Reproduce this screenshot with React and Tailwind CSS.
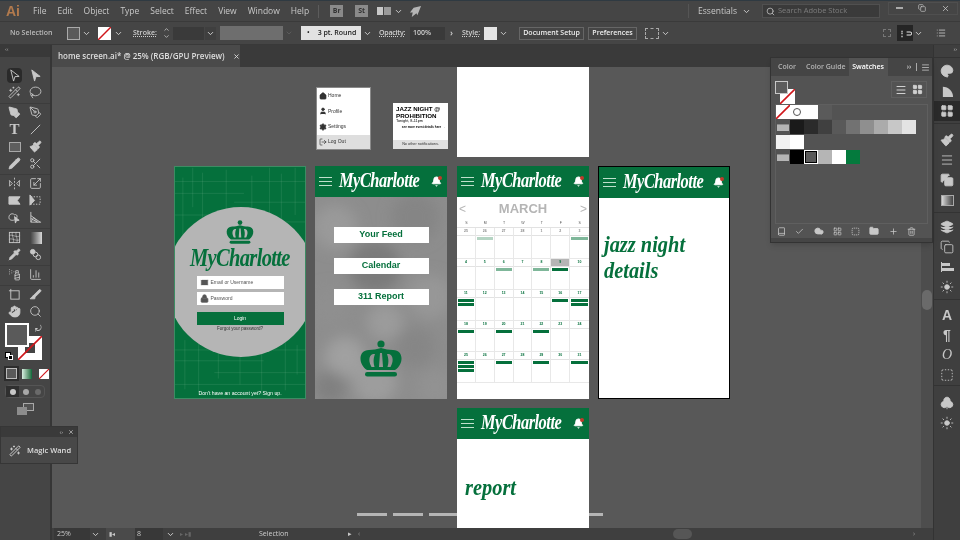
import React from "react";
import {
  Bell, Book, Check, ChevronDown, ChevronUp, ChartColumn, Cloud, Club, Copy, FlipHorizontal2, Folder, Hand,
  House, Layers, LayoutGrid, List, Lasso, LogOut, Menu, Palette, Paintbrush, PenTool, Pencil, Pipette, Plus,
  Scaling, Scissors, Search, Settings, SprayCan, SquareDashed, Sun, Trash2, User, WandSparkles, X, Slice, Mail, Lock,
} from "lucide-react";

const green = "bg-[#05703c]";
const script = "font-['Liberation_Serif',serif] italic font-bold";

// ---- small shared drawings ----
const Chev = ({ className = "" }) => <ChevronDown size={9} strokeWidth={2.5} className={"text-[#d0d0d0] " + className} />;

const NoneBox = ({ className = "" }) => (
  <svg viewBox="0 0 14 14" className={className}>
    <rect width="14" height="14" fill="#fff" />
    <line x1="0" y1="14" x2="14" y2="0" stroke="#d0161b" strokeWidth="1.6" />
  </svg>
);

const Crown = ({ className = "" }) => (
  <svg viewBox="0 0 44 38" className={className}>
    <circle cx="22" cy="4" r="3.6" fill="#05703c" />
    <path
      fillRule="evenodd"
      fill="#05703c"
      d="M8 30C-1 24 -1 10 10 10C14 10 18 9 22 8C26 9 30 10 34 10C45 10 45 24 36 30ZM21 13L23 13L24 27L20 27ZM14 14C10 15 9 21 12.5 27L15.5 27C14 22 14.5 18 16 14ZM30 14C34 15 35 21 31.5 27L28.5 27C30 22 29.5 18 28 14Z"
    />
    <rect x="6" y="32" width="32" height="4.5" rx="2.2" fill="#05703c" />
  </svg>
);

const AppHeader = () => (
  <div className={"h-[31px] shrink-0 flex items-center pl-[4px] pr-[5px] " + green}>
    <div className="w-[13px] shrink-0 flex flex-col gap-[3px]">
      <div className="h-[1px] bg-[#bfe0cc]" />
      <div className="h-[1px] bg-[#bfe0cc]" />
      <div className="h-[1px] bg-[#bfe0cc]" />
    </div>
    <span className={"ml-[7px] -mt-[3px] flex-1 min-w-0 origin-left scale-x-[0.82] text-white text-[20px] leading-none tracking-[-0.6px] whitespace-nowrap " + script}>
      MyCharlotte
    </span>
    <div className="relative shrink-0">
      <Bell size={11} fill="#fff" className="text-white" />
      <div className="absolute top-0 right-0 w-[4px] h-[4px] rounded-full bg-[#c0392b]" />
    </div>
  </div>
);

// ---- artboards ----
const textureLines = [
  [8, 10, 8, 70], [18, 0, 18, 40], [28, 5, 28, 60], [52, 2, 52, 45], [78, 8, 78, 42], [96, 0, 96, 50], [108, 6, 108, 60], [122, 0, 122, 48],
  [0, 14, 132, 14], [0, 26, 70, 26], [60, 35, 132, 35], [0, 48, 50, 48], [100, 55, 132, 55],
  [10, 175, 10, 225], [24, 170, 24, 228], [44, 180, 44, 214], [66, 165, 66, 220], [88, 176, 88, 230], [112, 168, 112, 226], [124, 180, 124, 210],
  [0, 185, 132, 185], [0, 196, 90, 196], [40, 208, 132, 208], [0, 220, 132, 220],
];

const LoginBoard = () => (
  <div className={"absolute left-[122px] top-[99px] w-[132px] h-[233px] overflow-hidden border border-[#3d8c63] " + green}>
    <svg viewBox="0 0 132 233" className="absolute inset-0 w-full h-full">
      {textureLines.map((l, i) => (
        <line key={i} x1={l[0]} y1={l[1]} x2={l[2]} y2={l[3]} stroke="#8fc3a4" strokeWidth="0.5" opacity="0.3" />
      ))}
    </svg>
    <div className="absolute left-[-9px] top-[40px] w-[150px] h-[150px] rounded-full bg-[#b5b5b5]" />
    <div className="absolute inset-0 flex flex-col items-center">
      <Crown className="w-[30px] h-[26px] mt-[53px]" />
      <span className={"mt-[1px] scale-x-[0.82] text-[#05703c] text-[25px] leading-[24px] tracking-[-0.8px] whitespace-nowrap " + script}>MyCharlotte</span>
      <div className="mt-[6px] w-[87px] h-[14px] bg-white flex items-center pl-[3px] gap-[2px]">
        <Mail size={9} fill="#555" className="text-white" />
        <span className="text-[5px] text-[#555] font-['Liberation_Sans',sans-serif]">Email or Username</span>
      </div>
      <div className="mt-[3px] w-[87px] h-[14px] bg-white flex items-center pl-[3px] gap-[2px]">
        <Lock size={9} fill="#555" className="text-[#555]" />
        <span className="text-[5px] text-[#555] font-['Liberation_Sans',sans-serif]">Password</span>
      </div>
      <div className={"mt-[7px] w-[87px] h-[14px] flex items-center justify-center " + green}>
        <span className="text-[5px] text-white font-['Liberation_Sans',sans-serif]">Login</span>
      </div>
      <span className="mt-[1px] text-[4.5px] text-[#333] font-['Liberation_Sans',sans-serif]">Forgot your password?</span>
      <span className="mt-[57px] text-[5.2px] text-white font-['Liberation_Sans',sans-serif]">Don&apos;t have an account yet? Sign up.</span>
    </div>
  </div>
);

const blotches = [
  [20, 30, 22, "#9a9a9a"], [100, 20, 24, "#858585"], [60, 70, 26, "#7a7a7a"], [15, 110, 20, "#8f8f8f"], [115, 100, 22, "#979797"],
  [70, 125, 18, "#9b9b9b"], [30, 160, 20, "#a0a0a0"], [100, 150, 20, "#868686"], [60, 185, 22, "#9d9d9d"], [15, 190, 16, "#808080"], [120, 190, 18, "#929292"],
];

const HomeBoard = () => (
  <div className="absolute left-[263px] top-[99px] w-[132px] h-[233px] overflow-hidden flex flex-col bg-[#8d8d8d]">
    <AppHeader />
    <div className="relative flex-1 flex flex-col items-center pt-[30px] gap-[15px]">
      <svg viewBox="0 0 132 202" className="absolute inset-0 w-full h-full">
        <defs>
          <filter id="soft"><feGaussianBlur stdDeviation="7" /></filter>
        </defs>
        <g filter="url(#soft)">
          {blotches.map((b, i) => <circle key={i} cx={b[0]} cy={b[1]} r={b[2]} fill={b[3]} />)}
        </g>
      </svg>
      {["Your Feed", "Calendar", "311 Report"].map((t) => (
        <div key={t} className="relative w-[95px] h-[16px] bg-white flex items-center justify-center text-[#05703c] text-[9px] font-bold font-['Liberation_Sans',sans-serif]">
          {t}
        </div>
      ))}
      <Crown className="relative w-[44px] h-[38px] mt-[20px]" />
    </div>
  </div>
);

const barColor = { d: "bg-[#05703c]", m: "bg-[#7fb79a]", l: "bg-[#b5d4c3]" };
const weeks = [
  { n: [25, 26, 27, 28, 1, 2, 3], b: { 1: "l", 6: "m" } },
  { n: [4, 5, 6, 7, 8, 9, 10], b: { 2: "m", 4: "m", 5: "d" }, hi: 5 },
  { n: [11, 12, 13, 14, 15, 16, 17], b: { 0: "dd", 5: "d", 6: "dd" } },
  { n: [18, 19, 20, 21, 22, 23, 24], b: { 0: "d", 2: "d", 4: "d" } },
  { n: [25, 26, 27, 28, 29, 30, 31], b: { 0: "ddd", 2: "d", 4: "d", 6: "d" } },
];

const CalendarBoard = () => (
  <div className="absolute left-[405px] top-[99px] w-[132px] h-[233px] overflow-hidden flex flex-col bg-white font-['Liberation_Sans',sans-serif]">
    <AppHeader />
    <div className="h-[23px] flex items-center justify-between px-[2px] text-[#b5b5b5]">
      <span className="text-[12px] leading-none">&lt;</span>
      <span className="text-[13px] font-bold leading-none">MARCH</span>
      <span className="text-[12px] leading-none">&gt;</span>
    </div>
    <div className="grid grid-cols-7 h-[7px] text-[3.5px] text-[#555] text-center leading-[7px]">
      {["S", "M", "T", "W", "T", "F", "S"].map((d, i) => <span key={i}>{d}</span>)}
    </div>
    <div className="border-t border-[#e2e2e2]">
      {weeks.map((w, wi) => (
        <div key={wi} className="grid grid-cols-7 h-[31px]">
          {w.n.map((num, i) => (
            <div key={i} className="border-r border-b border-[#e8e8e8] last:border-r-0">
              <div className={"h-[8px] border-b border-[#e2e2e2] text-[3.5px] leading-[7px] text-center font-bold " + (wi === 0 ? "text-[#888] " : "text-[#05703c] ") + (w.hi === i ? "bg-[#b5b5b5] text-[#777]" : "")}>
                {num}
              </div>
              <div className="flex flex-col gap-[1px] px-[1px] pt-[1px]">
                {(w.b[i] || "").split("").map((c, k) => (
                  <div key={k} className={"h-[3px] " + barColor[c]} />
                ))}
              </div>
            </div>
          ))}
        </div>
      ))}
    </div>
  </div>
);

const MiniMenu = () => (
  <div className="absolute left-[264px] top-[20px] w-[55px] h-[63px] bg-white border border-[#8a8a8a] flex flex-col font-['Liberation_Sans',sans-serif] text-[5px] text-[#333]">
    {[["Home", House], ["Profile", User], ["Settings", Settings]].map(([t, I]) => (
      <div key={t} className="h-[15.5px] flex items-center pl-[2px] gap-[1px]">
        <I size={8} fill="#333" className="text-[#333]" />
        <span>{t}</span>
      </div>
    ))}
    <div className="flex-1 bg-[#dedede] flex items-center pl-[2px] gap-[1px]">
      <LogOut size={8} className="text-[#333]" />
      <span>Log Out</span>
    </div>
  </div>
);

const MiniNote = () => (
  <div className="absolute left-[341px] top-[36px] w-[55px] h-[46px] bg-white flex flex-col font-['Liberation_Sans',sans-serif] text-black">
    <div className="flex-1 px-[3px] pt-[3px]">
      <div className="text-[6.2px] leading-[6.5px] font-bold whitespace-nowrap">JAZZ NIGHT @<br />PROHIBITION</div>
      <div className="text-[3.8px] leading-[4.5px]">Tonight, 8-11pm</div>
      <div className="mt-[1px] flex items-center justify-end text-[3px] font-bold whitespace-nowrap">see more event details here →</div>
    </div>
    <div className="h-[9px] bg-[#e0e0e0] text-[3.8px] text-center leading-[9px] text-[#333]">No other notifications.</div>
  </div>
);

// ---- left toolbar ----
const SelArrow = ({ solid }) => (
  <svg viewBox="0 0 14 14" className="w-[13px] h-[13px]">
    <path d="M3 1L12 8L7.5 8.2L6 13Z" fill={solid ? "#c8c8c8" : "none"} stroke="#c8c8c8" strokeWidth="1" />
  </svg>
);
const svgIcon = (children) => <svg viewBox="0 0 14 14" className="w-[13px] h-[13px]" fill="none" stroke="#c8c8c8" strokeWidth="1">{children}</svg>;
const lu = (I, fill) => <I size={13} strokeWidth={1.6} className="text-[#c8c8c8]" fill={fill || "none"} />;

const toolGroups = [
  [
    [<div className="w-[15px] h-[15px] bg-[#2a2a2a] rounded-sm flex items-center justify-center"><SelArrow /></div>, <SelArrow solid />],
    [lu(WandSparkles), lu(Lasso)],
  ],
  [
    [lu(PenTool, "#c8c8c8"), lu(PenTool)],
    [<span className="font-['Liberation_Serif',serif] font-bold text-[15px] leading-none text-[#c8c8c8]">T</span>, svgIcon(<line x1="2" y1="12" x2="12" y2="2" />)],
    [<div className="w-[12px] h-[10px] bg-[#5e5e5e] border border-[#a8a8a8]" />, lu(Paintbrush, "#c8c8c8")],
    [lu(Pencil, "#c8c8c8"), lu(Scissors)],
  ],
  [
    [lu(FlipHorizontal2), lu(Scaling)],
    [svgIcon(<path d="M1 3H13L10 7L13 11H1Z" fill="#c8c8c8" />), svgIcon(<><rect x="2" y="3" width="10" height="8" strokeDasharray="1.5 1.5" /><path d="M1 1L6 7L1 12Z" fill="#c8c8c8" /></>)],
    [svgIcon(<><path d="M1 7C1 3 5 2 7 4C10 3 11 7 8 9C5 11 1 10 1 7Z" /><path d="M7 6L12 10L9 10.5L8 13Z" fill="#c8c8c8" /></>), svgIcon(<path d="M2 1V12H13M2 5L12 12M2 8L9 12M2 12L5 7L9 12" />)],
  ],
  [
    [svgIcon(<><rect x="1.5" y="1.5" width="11" height="11" /><path d="M1 5C5 3 9 8 13 5M1 9C5 7 9 12 13 9M5 1C3 5 8 9 5 13M9 1C7 5 12 9 9 13" strokeWidth="0.7" /></>), <div className="w-[12px] h-[12px] bg-gradient-to-r from-[#3f3f3f] to-[#d8d8d8]" />],
    [lu(Pipette, "#c8c8c8"), svgIcon(<><circle cx="4" cy="4" r="2.5" fill="#c8c8c8" /><circle cx="7" cy="7" r="2.5" /><circle cx="10" cy="10" r="2.5" /></>)],
  ],
  [[lu(SprayCan), lu(ChartColumn)]],
  [
    [svgIcon(<><rect x="3" y="3" width="9" height="9" /><path d="M1 3H3M3 1V3" /></>), lu(Slice, "#c8c8c8")],
    [lu(Hand, "#c8c8c8"), lu(Search)],
  ],
];

const LeftTools = () => (
  <div className="w-[52px] shrink-0 bg-[#454545] border-r-2 border-[#363636] flex flex-col">
    <div className="h-[12px] bg-[#393939] text-[#aaa] text-[6px] leading-[8px] pl-[5px]">‹‹</div>
    <div className="h-[10px]" />
    {toolGroups.map((g, gi) => (
      <div key={gi} className={gi === 0 ? "" : "mt-[2px] border-t border-[#3c3c3c]"}>
        {g.map((row, ri) => (
          <div key={ri} className="grid grid-cols-2 w-[42px] ml-[4px] h-[17px]">
            {row.map((ic, ci) => (
              <div key={ci} className="flex items-center justify-center">{ic}</div>
            ))}
          </div>
        ))}
      </div>
    ))}
    {/* fill and stroke proxy */}
    <div className="relative h-[40px] mt-[1px] shrink-0">
      <div className="absolute left-[5px] top-[2px] w-[24px] h-[24px] bg-[#5a5a5a] border-2 border-white z-10" />
      <div className="absolute left-[18px] top-[15px] w-[24px] h-[24px] bg-white overflow-hidden">
        <div className="absolute left-[7px] top-[7px] w-[10px] h-[10px] bg-[#454545]" />
        <svg viewBox="0 0 24 24" className="absolute inset-0"><line x1="0" y1="24" x2="24" y2="0" stroke="#d0161b" strokeWidth="1.6" /></svg>
      </div>
      <div className="absolute left-[5px] top-[31px] w-[6px] h-[6px] bg-white border border-black" />
      <div className="absolute left-[8px] top-[34px] w-[5px] h-[5px] bg-black border border-white" />
      <div className="absolute left-[35px] top-[3px] text-[#c8c8c8] text-[8px] leading-none">⤾</div>
    </div>
    <div className="flex items-center mt-[7px] ml-[6px] gap-[4px]">
      <div className="w-[11px] h-[11px] bg-[#5a5a5a] border border-[#bbb] outline-2 outline-[#2d2d2d]" />
      <div className="w-[10px] h-[10px] ml-[1px] bg-gradient-to-r from-[#d8efe2] to-[#07693b]" />
      <NoneBox className="w-[10px] h-[10px] ml-[3px]" />
    </div>
    <div className="mt-[6px] mx-[5px] h-[13px] border border-[#555] rounded-sm flex">
      <div className="w-[13px] bg-[#2f2f2f] flex items-center justify-center"><div className="w-[6px] h-[6px] rounded-full bg-[#c8c8c8]" /></div>
      <div className="w-[13px] flex items-center justify-center"><div className="w-[6px] h-[6px] rounded-full bg-[#a8a8a8]" /></div>
      <div className="w-[12px] flex items-center justify-center"><div className="w-[6px] h-[6px] rounded-full bg-[#6a6a6a]" /></div>
    </div>
    <div className="mt-[5px] ml-[17px] relative w-[17px] h-[12px]">
      <div className="absolute right-0 top-0 w-[11px] h-[8px] border border-[#a8a8a8] bg-[#525252]" />
      <div className="absolute left-0 bottom-0 w-[10px] h-[8px] bg-[#8c8c8c]" />
    </div>
  </div>
);

// ---- right dock ----
const dockGroups = [
  { pad: "pt-[3px]", items: [[Palette, "#c8c8c8"], ["fan"], [LayoutGrid, "#c8c8c8", true]] },
  { pad: "mt-[2px] pt-[6px]", items: [[Paintbrush, "#c8c8c8"], [Menu], [Copy, "#c8c8c8"], ["grad"]] },
  { pad: "mt-[2px] pt-[4px]", items: [[Layers, "#c8c8c8"], [Copy], ["align"], [Sun, "#c8c8c8"]] },
  { pad: "mt-[2px] pt-[5px]", items: [["A"], ["¶"], ["O"], [SquareDashed]] },
  { pad: "pt-[7px]", items: [[Club, "#c8c8c8"], [Sun, "#c8c8c8"]] },
];

const DockIcon = ({ it }) => {
  const I = it[0];
  if (I === "grad") return <div className="w-[13px] h-[11px] border border-[#aaa] bg-gradient-to-r from-[#d8d8d8] to-[#444]" />;
  if (I === "fan") return <svg viewBox="0 0 14 14" className="w-[13px] h-[13px]"><path d="M2 13V2C8 2 13 7 13 13Z" fill="#c8c8c8" /></svg>;
  if (I === "align") {
    return (
      <div className="flex flex-col gap-[2px] border-l border-[#c8c8c8] py-[1px]">
        <div className="w-[8px] h-[3px] bg-[#c8c8c8]" />
        <div className="w-[12px] h-[3px] bg-[#c8c8c8]" />
      </div>
    );
  }
  if (typeof I === "string") {
    return <span className={"text-[#c8c8c8] text-[14px] leading-none " + (I === "O" ? "font-['Liberation_Serif',serif] italic" : "font-['Liberation_Sans',sans-serif] font-bold")}>{I}</span>;
  }
  return <I size={14} strokeWidth={1.5} className="text-[#c8c8c8]" fill={it[1] || "none"} />;
};

const Dock = () => (
  <div className="w-[27px] shrink-0 bg-[#3f3f3f] border-l border-[#333] flex flex-col">
    <div className="h-[12px] text-right pr-[3px] text-[#bbb] text-[6px] leading-[8px]">››</div>
    {dockGroups.map((g, i) => (
      <div key={i} className={"border-t border-[#333] " + g.pad}>
        {g.items.map((it, k) => (
          <div key={k} className={"h-[20px] flex items-center justify-center " + (it[2] ? "bg-[#2a2a2a]" : "")}>
            <DockIcon it={it} />
          </div>
        ))}
      </div>
    ))}
  </div>
);

// ---- swatches panel ----
const greys = ["#1a1a1a", "#2b2b2b", "#404040", "#595959", "#727272", "#8f8f8f", "#ababab", "#c7c7c7", "#e3e3e3"];
const Sw = ({ c, className = "" }) => <div className={"w-[14px] h-[14px] " + className} style={{ backgroundColor: c }} />;
const FolderSw = () => (
  <div className="w-[14px] h-[14px] flex items-center justify-center">
    <div className="w-[12px] h-[7px] bg-[#b5b5b5] border-t border-[#8a8a8a]" />
  </div>
);

const SwatchesPanel = () => (
  <div className="absolute left-[718px] top-[-10px] w-[163px] h-[186px] bg-[#535353] border border-[#333] shadow-md flex flex-col z-20 text-[7px]">
    <div className="h-[18px] shrink-0 bg-[#454545] flex items-center text-[#b5b5b5] font-semibold whitespace-nowrap">
      <span className="ml-[7px]">Color</span>
      <span className="ml-[10px]">Color Guide</span>
      <div className="ml-[3px] h-full w-[39px] bg-[#535353] text-white flex items-center justify-center">Swatches</div>
      <span className="ml-[19px] text-[#ccc]">››</span>
      <div className="ml-[5px] w-[1px] h-[8px] bg-[#aaa]" />
      <Menu size={9} className="ml-[4px] text-[#ccc]" />
    </div>
    <div className="h-[28px] shrink-0 flex justify-between px-[4px] pt-[5px]">
      <div className="relative w-[22px] h-[22px]">
        <div className="absolute left-[5px] top-[8px] w-[15px] h-[15px] bg-white overflow-hidden">
          <svg viewBox="0 0 14 14" className="absolute inset-0"><line x1="0" y1="14" x2="14" y2="0" stroke="#d0161b" strokeWidth="1.5" /></svg>
        </div>
        <div className="absolute left-0 top-0 w-[13px] h-[13px] bg-[#5c5c5c] border border-[#c8c8c8]" />
      </div>
      <div className="flex h-[17px] border border-[#5f5f5f] mr-[1px]">
        <div className="w-[17px] flex items-center justify-center"><Menu size={12} className="text-[#d0d0d0]" /></div>
        <div className="w-[17px] flex items-center justify-center"><LayoutGrid size={11} fill="#d0d0d0" className="text-[#d0d0d0]" /></div>
      </div>
    </div>
    <div className="mx-[4px] h-[120px] shrink-0 border border-[#5f5f5f] flex flex-col gap-[1px]">
      <div className="flex">
        <NoneBox className="w-[14px] h-[14px]" />
        <div className="relative w-[14px] h-[14px] bg-white flex items-center justify-center">
          <div className="w-[8px] h-[8px] rounded-full border border-[#555]" />
        </div>
        <Sw c="#ffffff" />
        <Sw c="#5a5a5a" />
      </div>
      <div className="flex">
        <FolderSw />
        {greys.map((c) => <Sw key={c} c={c} />)}
      </div>
      <div className="flex">
        <Sw c="#f2f2f2" />
        <Sw c="#ffffff" />
      </div>
      <div className="flex">
        <FolderSw />
        <Sw c="#000000" />
        <Sw c="#5a5a5a" className="border border-white outline outline-black -outline-offset-2" />
        <Sw c="#b5b5b5" />
        <Sw c="#ffffff" />
        <Sw c="#047a3d" />
      </div>
    </div>
    <div className="flex-1 flex items-center px-[6px] text-[#c8c8c8] justify-between pr-[16px]">
      <Book size={9} />
      <Check size={9} />
      <Cloud size={10} fill="#c8c8c8" />
      <LayoutGrid size={9} />
      <SquareDashed size={9} />
      <Folder size={10} fill="#c8c8c8" />
      <Plus size={9} />
      <Trash2 size={9} />
    </div>
    <div className="h-[4px] bg-[#454545]" />
  </div>
);

// ---- main ----
const menus = ["File", "Edit", "Object", "Type", "Select", "Effect", "View", "Window", "Help"];

const TitleBar = () => (
  <div className="h-[22px] shrink-0 bg-[#454545] border-t border-[#2f3a42] border-b border-b-[#3a3a3a] flex items-center text-[#c8c8c8] text-[8.5px]">
    <span className="ml-[6px] w-[27px] text-[#b27a4d] text-[14px] font-bold leading-none font-['Liberation_Sans',sans-serif]">Ai</span>
    <div className="flex gap-[11px]">
      {menus.map((m) => <span key={m}>{m}</span>)}
    </div>
    <div className="ml-[9px] w-[1px] h-[13px] bg-[#5c5c5c]" />
    <div className="ml-[11px] w-[13px] h-[12px] bg-[#8a8a8a] text-[#333] text-[7px] font-bold flex items-center justify-center">Br</div>
    <div className="ml-[12px] w-[13px] h-[12px] bg-[#8a8a8a] text-[#333] text-[7px] font-bold flex items-center justify-center">St</div>
    <div className="ml-[9px] flex gap-[1px]">
      <div className="w-[6px] h-[8px] bg-[#c8c8c8]" />
      <div className="w-[7px] h-[8px] bg-[#9a9a9a]" />
    </div>
    <Chev className="ml-[3px]" />
    <svg viewBox="0 0 14 14" className="ml-[6px] w-[13px] h-[13px]"><path d="M13 1L5 3L1 8L4 8L3 13L8 9L9 11Z" fill="#b5b5b5" /></svg>
    <div className="ml-auto w-[1px] h-[14px] bg-[#555]" />
    <span className="ml-[9px]">Essentials</span>
    <Chev className="ml-[5px]" />
    <div className="ml-[11px] w-[118px] h-[14px] bg-[#3a3a3a] border border-[#505050] flex items-center pl-[3px] gap-[3px] text-[7.5px] text-[#7d7d7d]">
      <Search size={9} className="text-[#c8c8c8]" />
      <span>Search Adobe Stock</span>
    </div>
    <div className="ml-[8px] mr-[2px] w-[70px] h-[13px] -mt-[6px] border border-[#4f4f4f] flex items-center justify-around text-[#c8c8c8]">
      <div className="w-[7px] h-[2px] bg-[#aaa]" />
      <Copy size={8} />
      <X size={9} />
    </div>
  </div>
);

const OptionsBar = () => (
  <div className="h-[23px] shrink-0 bg-[#454545] border-b border-[#393939] flex items-center text-[#d0d0d0] text-[7px] font-semibold">
    <span className="ml-[10px] w-[57px] text-[#bbb]">No Selection</span>
    <div className="w-[13px] h-[13px] bg-[#5a5a5a] border border-[#aaa]" />
    <Chev className="ml-[2px]" />
    <NoneBox className="ml-[7px] w-[13px] h-[13px]" />
    <Chev className="ml-[3px]" />
    <span className="ml-[10px] w-[24px] underline decoration-dotted">Stroke:</span>
    <div className="ml-[3px] w-[13px] flex flex-col items-center">
      <ChevronUp size={7} strokeWidth={2.5} />
      <ChevronDown size={7} strokeWidth={2.5} />
    </div>
    <div className="w-[31px] h-[13px] bg-[#3a3a3a]" />
    <div className="ml-[1px] w-[11px] h-[13px] bg-[#3f3f3f] flex items-center justify-center"><Chev /></div>
    <div className="ml-[4px] w-[63px] h-[14px] bg-[#6e6e6e]" />
    <div className="w-[11px] h-[14px] flex items-center justify-center"><ChevronDown size={8} className="text-[#666]" /></div>
    <div className="ml-[7px] w-[60px] h-[14px] bg-[#e2e2e2] text-[#222] flex items-center pl-[6px] gap-[8px]">
      <span>•</span><span>3 pt. Round</span>
    </div>
    <Chev className="ml-[2px]" />
    <span className="ml-[7px] w-[29px] underline decoration-dotted tracking-[-0.2px]">Opacity:</span>
    <div className="ml-[2px] w-[35px] h-[13px] bg-[#3a3a3a] flex items-center pl-[3px]">100%</div>
    <div className="w-[13px] text-center text-[9px]">›</div>
    <span className="ml-[4px] w-[22px] underline decoration-dotted">Style:</span>
    <div className="w-[13px] h-[13px] bg-[#e4e4e4]" />
    <Chev className="ml-[2px]" />
    <div className="ml-[11px] w-[65px] h-[13px] border border-[#666] flex items-center justify-center text-[#eee]">Document Setup</div>
    <div className="ml-[4px] w-[49px] h-[13px] border border-[#666] flex items-center justify-center text-[#eee]">Preferences</div>
    <div className="ml-[8px] w-[14px] h-[11px] border border-dashed border-[#aaa]" />
    <Chev className="ml-[2px]" />
    <div className="ml-auto w-[8px] h-[8px] border border-dashed border-[#777]" />
    <div className="ml-[6px] w-[16px] h-[16px] bg-[#252525] flex items-center justify-center text-[#ddd] text-[8px] font-bold">⋮⊃</div>
    <Chev className="ml-[1px]" />
    <List size={10} className="ml-[13px] mr-[14px] text-[#c8c8c8]" />
  </div>
);

const StatusBar = () => (
  <div className="h-[12px] shrink-0 bg-[#3f3f3f] flex items-center text-[#c8c8c8] text-[7px]">
    <div className="ml-[2px] w-[36px] h-full bg-[#383838] pl-[3px] leading-[12px]">25%</div>
    <Chev className="ml-[1px]" />
    <span className="ml-[6px] w-[29px] bg-[#4a4a4a] h-full flex items-center gap-[3px] pl-[3px] text-[6px]">▮◂</span>
    <div className="w-[28px] h-full bg-[#383838] pl-[2px] leading-[12px]">8</div>
    <Chev className="ml-[3px]" />
    <span className="ml-[5px] w-[18px] text-[#666] text-[6px]">▸ ▸▮</span>
    <span className="ml-[61px] w-[60px] text-[#ccc]">Selection</span>
    <span className="ml-[29px] text-[7px]">▸</span>
    <span className="ml-[6px] text-[#999]">‹</span>
    <div className="ml-[313px] w-[19px] h-[10px] rounded-full bg-[#565656]" />
    <span className="ml-auto mr-[18px] text-[#999]">›</span>
  </div>
);

export default function App() {
  return (
    <div className="relative w-[960px] h-[540px] overflow-hidden flex flex-col bg-[#454545] font-['Open_Sans',sans-serif] blur-[0.3px]">
      <TitleBar />
      <OptionsBar />
      <div className="relative flex flex-1 min-h-0">
        <LeftTools />
        <div className="flex-1 min-w-0 flex flex-col">
          <div className="h-[22px] shrink-0 bg-[#3a3a3a] flex items-end">
            <div className="h-[22px] w-[188px] bg-[#4a4a4a] flex items-center pl-[6px] gap-[8px] text-[8px] text-[#ddd] font-semibold whitespace-nowrap">
              <span>home screen.ai* @ 25% (RGB/GPU Preview)</span>
              <X size={7} strokeWidth={3} />
            </div>
          </div>
          <div className="relative flex-1 min-h-0 bg-[#585858] overflow-hidden flex justify-end">
            {/* vertical scroll track */}
            <div className="w-[12px] h-full bg-[#4d4d4d] pt-[223px] flex justify-center">
              <div className="w-[10px] h-[20px] rounded-full bg-[#6a6a6a]" />
            </div>
            <div className="absolute left-[405px] top-0 w-[132px] h-[90px] bg-white" />
            <MiniMenu />
            <MiniNote />
            <LoginBoard />
            <HomeBoard />
            <CalendarBoard />
            <div className="absolute left-[546px] top-[99px] w-[132px] h-[233px] bg-white border border-black flex flex-col">
              <AppHeader />
              <div className={"mt-[33px] ml-[5px] origin-left scale-x-[0.85] text-[#05703c] text-[24px] leading-[26px] " + script}>jazz night<br />details</div>
            </div>
            <div className="absolute left-[305px] top-[446px] w-[30px] h-[3px] bg-[#b5b5b5]" />
            <div className="absolute left-[341px] top-[446px] w-[30px] h-[3px] bg-[#b5b5b5]" />
            <div className="absolute left-[377px] top-[446px] w-[28px] h-[3px] bg-[#b5b5b5]" />
            <div className="absolute left-[537px] top-[446px] w-[14px] h-[3px] bg-[#b5b5b5]" />
            <div className="absolute left-[405px] top-[341px] w-[132px] h-[233px] bg-white flex flex-col">
              <AppHeader />
              <div className={"mt-[35px] ml-[8px] origin-left scale-x-[0.85] text-[#05703c] text-[24px] leading-[26px] " + script}>report</div>
            </div>
          </div>
          <StatusBar />
        </div>
        <Dock />
        {/* floating panels */}
        <div className="absolute left-0 top-[381px] w-[78px] h-[38px] bg-[#484848] border border-[#363636] z-20">
          <div className="h-[10px] bg-[#3a3a3a] flex items-center justify-end gap-[5px] pr-[3px] text-[#bbb] text-[6px]">
            <span>‹›</span><X size={6} strokeWidth={3} />
          </div>
          <div className="h-[27px] flex items-center pl-[8px] gap-[6px] text-[#ddd] text-[7.5px] font-semibold">
            <WandSparkles size={12} className="text-[#c8c8c8]" />
            <span>Magic Wand</span>
          </div>
        </div>
      </div>
      {/* swatches sits over the canvas, measured from its top-left */}
      <div className="absolute left-[52px] top-[67px] w-0 h-0">
        <SwatchesPanel />
      </div>
    </div>
  );
}
